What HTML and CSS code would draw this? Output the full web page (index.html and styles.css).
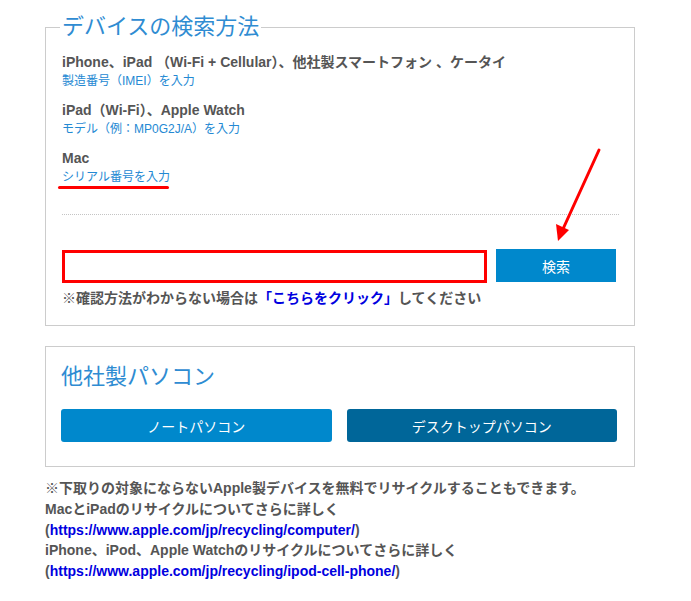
FILE: index.html
```html
<!DOCTYPE html>
<html lang="ja">
<head>
<meta charset="utf-8">
<title>デバイスの検索方法</title>
<link rel="stylesheet" href="styles.css">
</head>
<body>
<div class="page">
  <fieldset class="search-box">
    <legend class="box-title">デバイスの検索方法</legend>
    <div class="devices">
      <div class="dev">
        <div class="dev-name">iPhone、iPad （Wi-Fi + Cellular）、他社製スマートフォン 、ケータイ</div>
        <div class="dev-hint">製造番号（IMEI）を入力</div>
      </div>
      <div class="dev">
        <div class="dev-name">iPad（Wi-Fi）、Apple Watch</div>
        <div class="dev-hint">モデル（例：MP0G2J/A）を入力</div>
      </div>
      <div class="dev">
        <div class="dev-name">Mac</div>
        <div class="dev-hint"><span class="marked">シリアル番号を入力</span></div>
      </div>
    </div>
    <div class="sep"></div>
    <div class="search-row">
      <input class="search-input" type="text" aria-label="検索">
      <button class="search-btn" type="button">検索</button>
    </div>
    <p class="note">※確認方法がわからない場合は<a class="link" href="#">「こちらをクリック」</a>してください</p>
  </fieldset>

  <div class="pc-box">
    <h2 class="pc-title">他社製パソコン</h2>
    <div class="pc-buttons">
      <a class="pc-btn note-pc" href="#">ノートパソコン</a>
      <a class="pc-btn desk-pc" href="#">デスクトップパソコン</a>
    </div>
  </div>

  <div class="footer">
    <p>※下取りの対象にならないApple製デバイスを無料でリサイクルすることもできます。</p>
    <p>MacとiPadのリサイクルについてさらに詳しく</p>
    <p>(<a class="link" href="#">https://www.apple.com/jp/recycling/computer/</a>)</p>
    <p>iPhone、iPod、Apple Watchのリサイクルについてさらに詳しく</p>
    <p>(<a class="link" href="#">https://www.apple.com/jp/recycling/ipod-cell-phone/</a>)</p>
  </div>

  <svg class="arrow" width="691" height="601" viewBox="0 0 691 601" aria-hidden="true">
    <line x1="599" y1="150" x2="563" y2="229" stroke="#ff0000" stroke-width="3" stroke-linecap="round"/>
    <polygon points="558,241 556,224 569,230" fill="#ff0000"/>
  </svg>
</div>
</body>
</html>
```
FILE: styles.css
```css
* { box-sizing: border-box; }
html, body { margin: 0; padding: 0; background: #fff; }
body {
  font-family: "Liberation Sans", "Noto Sans CJK JP", sans-serif;
  color: #555;
}
.page {
  position: relative;
  width: 691px;
  padding: 15px 0 0 45px;
}
.search-box {
  width: 590px;
  margin: 0;
  border: 1px solid #cccccc;
  padding: 0 16px 18px 16px;
}
.box-title {
  font-size: 22px;
  line-height: 24px;
  font-weight: normal;
  color: #2f8cd2;
  padding: 0 2px;
  margin-left: -2px;
}
.devices {
  display: flex;
  flex-direction: column;
  gap: 11px;
  margin-top: 14px;
}
.dev-name {
  font-size: 14px;
  font-weight: bold;
  line-height: 18px;
  color: #555;
}
.dev-hint {
  font-size: 12px;
  line-height: 18px;
  padding-top: 1px;
  color: #2489d3;
}
.marked { position: relative; }
.marked::after {
  content: "";
  position: absolute;
  left: -4px;
  right: 1px;
  bottom: -5px;
  height: 3px;
  background: #ff0000;
  border-radius: 2px;
}
.sep {
  margin-top: 28px;
  border-top: 1px dotted #c4c4c4;
  margin-right: -1px;
}
.search-row {
  display: flex;
  align-items: flex-start;
  gap: 9px;
  margin-top: 34px;
}
.search-input {
  width: 425px;
  height: 33px;
  margin: 1px 0 0 0;
  border: 3px solid #ff0000;
  background: #fff;
  padding: 0 6px;
  outline: none;
  font: inherit;
}
.search-btn {
  width: 120px;
  height: 33px;
  border: none;
  background: #0088cc;
  color: #fff;
  font-family: inherit;
  font-size: 14px;
  padding: 0;
  cursor: pointer;
}
.note {
  margin: 6px 0 0 0;
  font-size: 14px;
  line-height: 18px;
  font-weight: bold;
  color: #555;
}
.link {
  color: #0000e0;
  text-decoration: none;
  font-weight: bold;
}
.pc-box {
  width: 590px;
  margin-top: 20px;
  border: 1px solid #cccccc;
  padding: 15px 17px 24px 15px;
}
.pc-title {
  margin: 0;
  font-size: 22px;
  line-height: 30px;
  font-weight: normal;
  color: #2f8cd2;
}
.pc-buttons {
  display: flex;
  gap: 15px;
  margin-top: 17px;
}
.pc-btn {
  flex: 1;
  height: 33px;
  display: flex;
  align-items: center;
  justify-content: center;
  border-radius: 3px;
  color: #fff;
  font-size: 14px;
  text-decoration: none;
}
.note-pc { background: #0088cc; }
.desk-pc { background: #006699; }
.footer {
  margin-top: 11px;
  font-size: 14px;
  font-weight: bold;
  line-height: 20.75px;
  color: #555;
}
.footer p { margin: 0; }
.arrow {
  position: absolute;
  left: 0;
  top: 0;
  pointer-events: none;
}
```
